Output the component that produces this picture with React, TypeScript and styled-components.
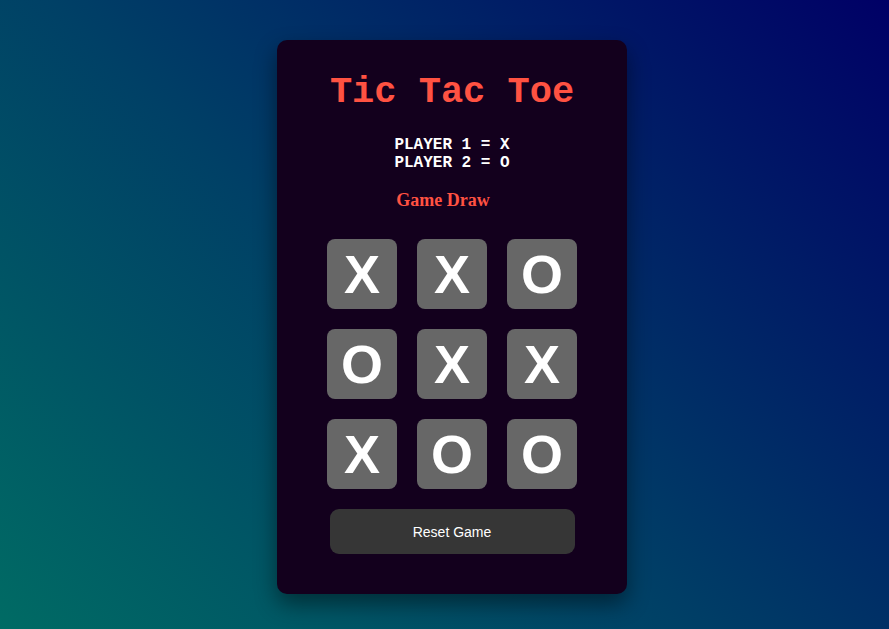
import { FC } from "react";
import styled, { createGlobalStyle } from "styled-components";

const GlobalStyle = createGlobalStyle`
    html, body {
        margin: 0;
        padding: 0;
        height: 100%;
    }
    body {
        background: linear-gradient(45deg, #006b64 0%, #004066 45%, #000066 100%);
        font-family: "Liberation Sans", Arial, sans-serif;
    }
    #root {
        min-height: 100%;
    }
`;

const Page = styled.div`
    width: 100%;
    height: 629px;
    display: flex;
    justify-content: center;
    align-items: flex-start;
    padding: 40px 0 0 15px;
    box-sizing: border-box;
`;

const Card = styled.div`
    width: 350px;
    height: 554px;
    box-sizing: border-box;
    background-color: #13001d;
    border-radius: 10px;
    box-shadow: 0 10px 22px rgba(0, 0, 0, 0.45);
    padding-top: 32px;
    display: flex;
    flex-direction: column;
    align-items: center;
`;

const Title = styled.h1`
    margin: 0;
    font-family: "Liberation Mono", "Courier New", monospace;
    font-weight: bold;
    font-size: 37px;
    line-height: 40px;
    color: #ff5242;
`;

const Players = styled.div`
    margin-top: 24px;
    font-family: "Liberation Mono", "Courier New", monospace;
    font-weight: bold;
    font-size: 16px;
    line-height: 18px;
    color: #fff;
    text-align: left;
`;

const Status = styled.h3`
    margin: 18px 0 0;
    padding-right: 18px;
    font-family: "Liberation Serif", "Times New Roman", serif;
    font-weight: bold;
    font-size: 18px;
    line-height: 20px;
    color: #ff5242;
`;

const Board = styled.div`
    margin-top: 29px;
    display: grid;
    grid-template-columns: repeat(3, 70px);
    grid-auto-rows: 70px;
    gap: 20px;
`;

const Cell = styled.button`
    border: none;
    padding: 0;
    border-radius: 8px;
    background-color: #676767;
    color: #fff;
    font-family: "Liberation Sans", Arial, sans-serif;
    font-weight: bold;
    font-size: 54px;
    display: flex;
    align-items: center;
    justify-content: center;
    cursor: pointer;
`;

const ResetButton = styled.button`
    margin-top: 20px;
    width: 245px;
    height: 45px;
    border: none;
    border-radius: 9px;
    background-color: #363636;
    color: #fff;
    font-family: "Liberation Sans", Arial, sans-serif;
    font-size: 14px;
    cursor: pointer;
`;

const board = ["X", "X", "O", "O", "X", "X", "X", "O", "O"];

const App: FC = () => {
    return <>
        <GlobalStyle />
        <Page>
            <Card>
                <Title>Tic Tac Toe</Title>
                <Players>
                    <div>PLAYER 1 = X</div>
                    <div>PLAYER 2 = O</div>
                </Players>
                <Status>Game Draw</Status>
                <Board>
                    {board.map((v, i) => <Cell key={i}>{v}</Cell>)}
                </Board>
                <ResetButton>Reset Game</ResetButton>
            </Card>
        </Page>
    </>
};

export default App;
